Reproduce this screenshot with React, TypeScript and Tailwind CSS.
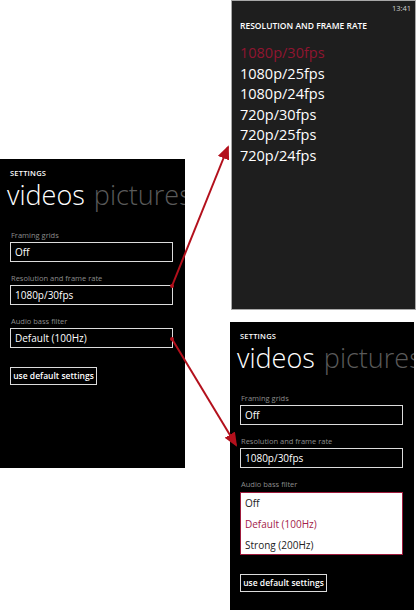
import React from "react";

const font = { fontFamily: '"Open Sans", "Noto Sans", sans-serif' };

const resolutions = ["1080p/30fps", "1080p/25fps", "1080p/24fps", "720p/30fps", "720p/25fps", "720p/24fps"];

function Field({ label, value, first }: { label: string; value: string; first?: boolean }) {
  return (
    <div className={first ? "mt-[18px]" : "mt-[11px]"}>
      <div className="text-[7.5px] leading-[10px] text-[#8c8c8c] pl-[1px]">{label}</div>
      <div className="mt-[2px] h-[20px] w-[163px] border-[1.5px] border-[#dcdcdc] flex items-center px-[4px] text-[10px] text-white">
        {value}
      </div>
    </div>
  );
}

function Settings({ expanded }: { expanded?: boolean }) {
  return (
    <div className="pl-[10px] pt-[9px] overflow-hidden h-full" style={font}>
      <div className="text-[7.5px] leading-[10px] font-semibold text-white tracking-[0.2px]">SETTINGS</div>
      <div className="-ml-[3px] text-[27px] leading-[34px] font-light whitespace-nowrap">
        <span className="text-white">videos</span>
        <span className="ml-[9px] text-[#5a5a5a]">pictures</span>
      </div>
      <Field first label="Framing grids" value="Off" />
      <Field label="Resolution and frame rate" value="1080p/30fps" />
      {expanded ? (
        <div className="mt-[11px]">
          <div className="text-[7.5px] leading-[10px] text-[#8c8c8c] pl-[1px]">Audio bass filter</div>
          <div className="mt-[3px] h-[63px] w-[163px] bg-white border-[1.5px] border-[#9e1a3c] px-[4px] text-[10px] leading-[21px]">
            <div className="text-[#222]">Off</div>
            <div className="text-[#a3214a]">Default (100Hz)</div>
            <div className="text-[#222]">Strong (200Hz)</div>
          </div>
        </div>
      ) : (
        <Field label="Audio bass filter" value="Default (100Hz)" />
      )}
      <div className="mt-[19px] h-[18px] w-[87px] border-[1.5px] border-[#dcdcdc] flex items-center justify-center text-[8.5px] font-semibold text-white whitespace-nowrap">
        use default settings
      </div>
    </div>
  );
}

function Picker() {
  return (
    <div className="h-full" style={font}>
      <div className="text-right pr-[4px] pt-[1px] text-[7.5px] leading-[12px] text-[#cfcfcf]">13:41</div>
      <div className="mt-[7px] pl-[8px] text-[8.5px] leading-[10px] font-semibold text-white whitespace-nowrap">
        RESOLUTION AND FRAME RATE
      </div>
      <div className="mt-[12px] pl-[8px]">
        {resolutions.map((r, i) => (
          <div key={r} className={"text-[14.5px] leading-[20.6px] " + (i === 0 ? "text-[#8f1530]" : "text-white")}>
            {r}
          </div>
        ))}
      </div>
    </div>
  );
}

export default function App() {
  return (
    <main className="relative w-[417px] h-[610px] bg-white overflow-hidden flex">
      <div className="shrink-0 w-[185px] h-[309px] mt-[159px] bg-black">
        <Settings />
      </div>

      <div className="ml-[45px] flex flex-col">
        <div className="ml-[1px] w-[185px] h-[310px] bg-[#1e1e1e] border border-[#a8a8a8]">
          <Picker />
        </div>
        <div className="mt-[12px] w-[184px] h-[288px] bg-black">
          <Settings expanded />
        </div>
      </div>

      {/* red arrows linking the screens */}
      <svg className="absolute inset-0 pointer-events-none" width="417" height="610" viewBox="0 0 417 610">
        <defs>
          <marker id="head" markerWidth="7" markerHeight="6" refX="6" refY="3" orient="auto" markerUnits="strokeWidth">
            <path d="M0,0 L7,3 L0,6 Z" fill="#b3101c" />
          </marker>
        </defs>
        <line x1="172" y1="286" x2="228" y2="147" stroke="#b3101c" strokeWidth="2" markerEnd="url(#head)" />
        <circle cx="172" cy="286" r="2" fill="#b3101c" />
        <line x1="172" y1="339" x2="236" y2="445" stroke="#b3101c" strokeWidth="2" markerEnd="url(#head)" />
        <circle cx="172" cy="339" r="2" fill="#b3101c" />
      </svg>
    </main>
  );
}
